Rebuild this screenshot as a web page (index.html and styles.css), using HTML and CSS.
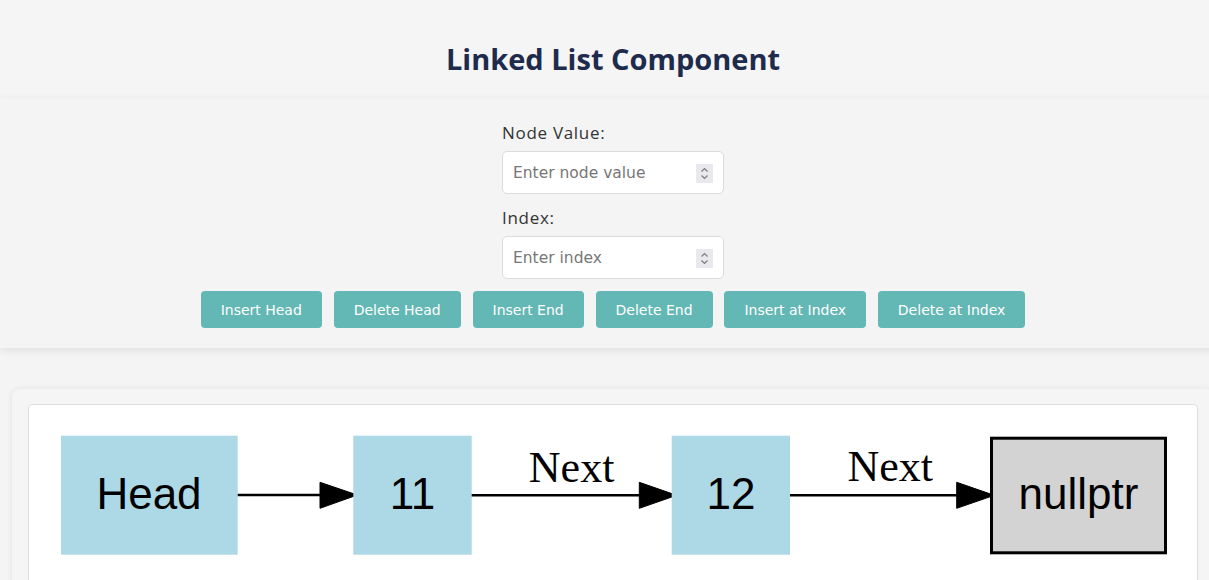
FILE: index.html
```html
<!DOCTYPE html>
<html lang="en">
<head>
<meta charset="utf-8">
<title>Linked List Component</title>
<link rel="stylesheet" href="styles.css">
</head>
<body>
<div class="page">
  <header class="top">
    <h1 class="title">Linked List Component</h1>
  </header>
  <section class="controls">
    <div class="fields">
      <label class="field-label" for="val">Node Value:</label>
      <div class="input-wrap">
        <input class="field-input" id="val" type="number" placeholder="Enter node value">
        <span class="spin" aria-hidden="true">
          <svg width="17" height="19" viewBox="0 0 17 19"><path d="M5.5 7.5 L8.5 4.5 L11.5 7.5 M5.5 11.5 L8.5 14.5 L11.5 11.5" fill="none" stroke="#7a7a80" stroke-width="1.2"/></svg>
        </span>
      </div>
      <label class="field-label" for="idx">Index:</label>
      <div class="input-wrap">
        <input class="field-input" id="idx" type="number" placeholder="Enter index">
        <span class="spin" aria-hidden="true">
          <svg width="17" height="19" viewBox="0 0 17 19"><path d="M5.5 7.5 L8.5 4.5 L11.5 7.5 M5.5 11.5 L8.5 14.5 L11.5 11.5" fill="none" stroke="#7a7a80" stroke-width="1.2"/></svg>
        </span>
      </div>
    </div>
    <div class="buttons">
      <button class="btn">Insert Head</button>
      <button class="btn">Delete Head</button>
      <button class="btn">Insert End</button>
      <button class="btn">Delete End</button>
      <button class="btn">Insert at Index</button>
      <button class="btn">Delete at Index</button>
    </div>
  </section>
  <section class="card">
    <div class="canvas">
      <svg class="diagram" width="1168" height="200" viewBox="29 405 1168 200" xmlns="http://www.w3.org/2000/svg">
        <rect x="61" y="435.7" width="176.7" height="119" fill="#add8e6"/>
        <text class="node-text" x="149" y="509.3">Head</text>

        <line x1="237.7" y1="495" x2="321" y2="495" stroke="#000" stroke-width="2.6"/>
        <polygon points="320,482.3 357.3,495 320,508.3" fill="#000" stroke="#000" stroke-width="1"/>

        <rect x="353.3" y="435.7" width="118.4" height="119" fill="#add8e6"/>
        <text class="node-text" x="412.5" y="509.3">11</text>

        <line x1="471.7" y1="495.3" x2="640" y2="495.3" stroke="#000" stroke-width="2.6"/>
        <polygon points="639.3,482.3 676.7,495.3 639.3,508.3" fill="#000" stroke="#000" stroke-width="1"/>
        <text class="edge-text" x="571.6" y="481.7">Next</text>

        <rect x="671.7" y="435.7" width="118.3" height="119" fill="#add8e6"/>
        <text class="node-text" x="731" y="509.3">12</text>

        <line x1="790" y1="495.3" x2="957.5" y2="495.3" stroke="#000" stroke-width="2.6"/>
        <polygon points="956.7,482.3 994.3,495.3 956.7,508.3" fill="#000" stroke="#000" stroke-width="1"/>
        <text class="edge-text" x="890.3" y="481.3">Next</text>

        <rect x="991.5" y="438.2" width="174" height="114.6" fill="#d3d3d3" stroke="#000" stroke-width="3"/>
        <text class="node-text" x="1078.5" y="509.3">nullptr</text>
      </svg>
    </div>
  </section>
</div>
</body>
</html>
```

FILE: styles.css
```css
html, body {
  margin: 0;
  padding: 0;
  overflow: hidden;
  background: #f4f4f4;
}

.page {
  width: 1226px;
  font-family: "Open Sans", "Liberation Sans", sans-serif;
}

.top {
  box-sizing: border-box;
  height: 98px;
  padding-top: 39px;
  text-align: center;
  background: #f5f5f5;
}

.title {
  margin: 0;
  font-family: "Open Sans", sans-serif;
  font-weight: 700;
  font-size: 29px;
  line-height: 40px;
  color: #1e2b4d;
}

.controls {
  display: flex;
  flex-direction: column;
  align-items: center;
  padding: 23px 0 20px;
  background: #f4f4f4;
  box-shadow: 0 2px 8px rgba(0, 0, 0, 0.09);
  position: relative;
}

.fields {
  display: flex;
  flex-direction: column;
  width: 222px;
}

.field-label {
  font-family: "Open Sans", sans-serif;
  font-size: 17px;
  line-height: 24px;
  letter-spacing: 0.7px;
  color: #333;
  margin-bottom: 6px;
}

.input-wrap {
  position: relative;
  margin: 0 0 12px;
}

.field-input {
  display: block;
  width: 100%;
  box-sizing: border-box;
  height: 43px;
  margin: 0;
  padding: 0 34px 0 10px;
  border: 1px solid #dcdcdc;
  border-radius: 5px;
  background: #fff;
  font-family: "DejaVu Sans", sans-serif;
  font-size: 15.5px;
  color: #333;
  -moz-appearance: textfield;
}

.field-input::-webkit-inner-spin-button,
.field-input::-webkit-outer-spin-button {
  -webkit-appearance: none;
  margin: 0;
}

.field-input::placeholder {
  color: #777;
}

.spin {
  position: absolute;
  top: 13px;
  right: 11px;
  width: 17px;
  height: 19px;
  background: #e9e9ed;
  border-radius: 1px;
  pointer-events: none;
}

.spin svg {
  display: block;
}

.buttons {
  display: flex;
  justify-content: center;
  gap: 11.8px;
}

.btn {
  height: 37px;
  padding: 0 20px;
  border: 0;
  border-radius: 4px;
  background: #63b7b5;
  color: #fff;
  font-family: "DejaVu Sans", sans-serif;
  font-size: 14px;
  cursor: pointer;
}

.card {
  margin: 41px 12px 0;
  padding: 15px 16px 16px;
  background: #f5f5f5;
  border-radius: 8px;
  box-shadow: 0 0 6px rgba(0, 0, 0, 0.08);
}

.canvas {
  background: #fff;
  border: 1px solid #dddddd;
  border-radius: 4px;
}

.diagram {
  display: block;
}

.node-text {
  font-family: "Liberation Sans", Arial, sans-serif;
  font-size: 44px;
  text-anchor: middle;
  fill: #000;
}

.edge-text {
  font-family: "Liberation Serif", "Times New Roman", serif;
  font-size: 44px;
  text-anchor: middle;
  fill: #000;
}
```
